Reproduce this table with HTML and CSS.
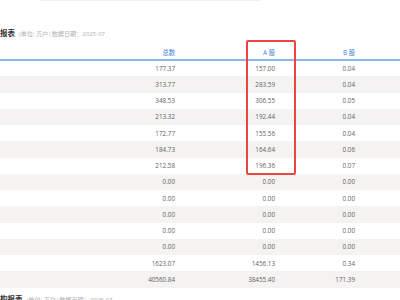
FILE: index.html
```html
<!DOCTYPE html>
<html lang="zh-CN">
<head>
  <meta charset="UTF-8" />
  <meta name="viewport" content="width=device-width, initial-scale=1.0"/>
  <title>账户结构报表</title>
  <link rel="stylesheet" href="styles.css">
</head>
<body>
  <div class="page">
    <div class="prev-card"></div>

    <div class="report-head">
      <h2 class="report-title">账户结构报表</h2>
      <span class="report-note">(单位: 万户|数据日期：2025-07</span>
    </div>

    <table class="report">
      <colgroup>
        <col class="c-label"><col class="c-num"><col class="c-a"><col class="c-b"><col class="c-rest">
      </colgroup>
      <thead>
        <tr><th></th><th>总数</th><th>A 股</th><th>B 股</th><th></th></tr>
      </thead>
      <tbody>
        <tr><td></td><td>177.37</td><td>157.00</td><td>0.04</td><td></td></tr>
        <tr><td></td><td>313.77</td><td>283.59</td><td>0.04</td><td></td></tr>
        <tr><td></td><td>348.53</td><td>306.55</td><td>0.05</td><td></td></tr>
        <tr><td></td><td>213.32</td><td>192.44</td><td>0.04</td><td></td></tr>
        <tr><td></td><td>172.77</td><td>155.56</td><td>0.04</td><td></td></tr>
        <tr><td></td><td>184.73</td><td>164.64</td><td>0.06</td><td></td></tr>
        <tr><td></td><td>212.58</td><td>196.36</td><td>0.07</td><td></td></tr>
        <tr><td></td><td>0.00</td><td>0.00</td><td>0.00</td><td></td></tr>
        <tr><td></td><td>0.00</td><td>0.00</td><td>0.00</td><td></td></tr>
        <tr><td></td><td>0.00</td><td>0.00</td><td>0.00</td><td></td></tr>
        <tr><td></td><td>0.00</td><td>0.00</td><td>0.00</td><td></td></tr>
        <tr><td></td><td>0.00</td><td>0.00</td><td>0.00</td><td></td></tr>
        <tr><td></td><td>1623.07</td><td>1456.13</td><td>0.34</td><td></td></tr>
        <tr><td></td><td>40560.84</td><td>38455.40</td><td>171.39</td><td></td></tr>
      </tbody>
    </table>

    <div class="report-head next">
      <h2 class="report-title">投资者结构报表</h2>
      <span class="report-note">(单位: 万户|数据日期：2025-07</span>
    </div>

    <!-- highlight around the A-share column -->
    <div class="mark"></div>
  </div>
</body>
</html>
```

FILE: styles.css
```css
:root {
  --blue: #3f80d8;
  --blue-line: #8fb5e8;
  --text: #5f5f5f;
  --title: #333;
  --note: #b0b0b0;
  --stripe: #f4f3f1;
  --red: #e8463e;
}

* { box-sizing: border-box; margin: 0; padding: 0; }

body {
  background: #fff;
  overflow: hidden;
  font-family: "Open Sans", "Noto Sans CJK SC", sans-serif;
}

.page {
  position: relative;
  width: 430px;
  margin-left: -30px;
}

.prev-card {
  height: 1px;
  width: 220px;
  margin-left: 70px;
  background: #f2f2f2;
}

.report-head {
  display: flex;
  align-items: baseline;
  margin-top: 26px;
  line-height: 12px;
}
.report-head.next { margin-top: 5px; }

.report-title {
  font-size: 7.5px;
  font-weight: 700;
  color: var(--title);
}

.report-note {
  margin-left: 4px;
  font-size: 6.1px;
  color: var(--note);
}

.report {
  width: 430px;
  margin-top: 7px;
  table-layout: fixed;
  border-collapse: collapse;
  font-size: 6.3px;
  color: var(--text);
}
.c-label { width: 125px; }
.c-num   { width: 80px; }
.c-a     { width: 100px; }
.c-b     { width: 80px; }
.c-rest  { width: 45px; }

.report th {
  height: 12px;
  line-height: 12px;
  font-weight: 400;
  text-align: right;
  color: var(--blue);
  border-bottom: 2px solid var(--blue-line);
}

.report td {
  height: 16.25px;
  text-align: right;
  vertical-align: middle;
}
.report tbody tr:nth-child(even) { background: var(--stripe); }

.mark {
  position: absolute;
  left: 276px;
  top: 40px;
  width: 50px;
  height: 135px;
  border: 2px solid var(--red);
  border-radius: 2px;
}
```
